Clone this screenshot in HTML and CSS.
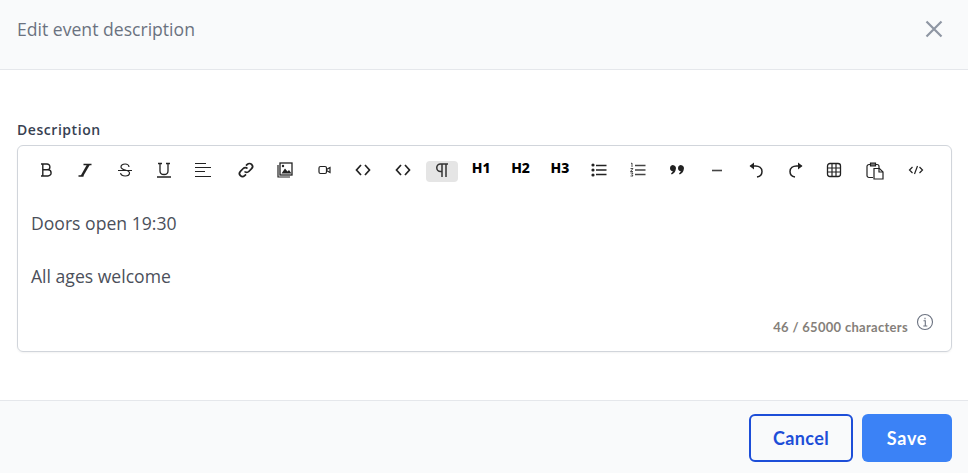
FILE: index.html
```html
<!DOCTYPE html>
<html lang="en">
<head>
<meta charset="utf-8">
<title>Edit event description</title>
<link rel="stylesheet" href="styles.css">
</head>
<body>
<div class="modal">
  <header class="modal-head">
    <h1 class="modal-title">Edit event description</h1>
    <button class="close" aria-label="Close">
      <svg width="18" height="18" viewBox="0 0 18 18"><path d="M1.500 1.500l15 15M16.500 1.500l-15 15" fill="none" stroke="#8f96a3" stroke-width="2.200"/></svg>
    </button>
  </header>
  <main class="modal-body">
    <label class="field-label">Description</label>
    <div class="editor">
      <div class="toolbar">
        <button class="tool"><svg class="ic" viewBox="0 0 16 16"><path d="M3 2H9a2.900 2.900 0 0 1 0 5.800H4.800M4.800 7.800h5.200a3.100 3.100 0 0 1 0 6.200H3M4.800 2v12" stroke-width="1.400"/></svg></button>
        <button class="tool"><svg class="ic" viewBox="0 0 16 16"><path d="M6.500 2.500h8M1.500 14h5" stroke-width="1.300"/><path d="M10 2.500h3L6.300 14H3.500z" fill="#222" stroke="none"/></svg></button>
        <button class="tool"><svg class="ic" viewBox="0 0 16 16"><path d="M12 5C11.800 3 10.200 2 8.200 2 5.800 2 4 3.200 4 5c0 3.700 8.500 2.300 8.500 6 0 2-1.900 3-4.300 3-2.500 0-4.200-1-4.700-2.800M1 8.500h14"/></svg></button>
        <button class="tool"><svg class="ic" viewBox="0 0 16 16"><path d="M2 1.500h4M4 1.500V9c0 2.400 1.500 3.500 4 3.500s4-1.100 4-3.500V1.500M10 1.500h4M1 15h14" stroke-width="1.300"/></svg></button>
        <button class="tool"><svg class="ic" viewBox="0 0 16 16"><path d="M0 1.500h11M0 5.500h16M0 9.500h10M0 14.500h16"/></svg></button>
        <button class="tool tool-gap"><svg class="ic" viewBox="0 0 16 16"><path d="M6.500 9.500a3 3 0 0 0 4.300 0l2.800-2.800a3 3 0 0 0-4.300-4.300L8 3.700M9.500 6.500a3 3 0 0 0-4.300 0L2.400 9.300a3 3 0 0 0 4.300 4.300L8 12.300" stroke-width="1.700"/></svg></button>
        <button class="tool"><svg class="ic" viewBox="0 0 16 16"><path d="M1 3v12h12"/><rect x="3" y="1" width="12" height="12" stroke-width="1.300"/><path d="M4.500 11.500l3.500-5 2.500 3 1.500-1.500 2.500 3.500z" fill="#222" stroke="none"/><circle cx="6" cy="4" r="1.200" fill="#222" stroke="none"/></svg></button>
        <button class="tool"><svg class="ic" viewBox="0 0 16 16"><rect x="3" y="4.500" width="7.500" height="7" rx="1.500"/><path d="M10.500 7.500l3.500-2v5l-3.500-2"/></svg></button>
        <button class="tool"><svg class="ic" viewBox="0 0 16 16"><path d="M6 3L1.500 8 6 13M10 3l4.500 5L10 13" stroke-width="1.700"/></svg></button>
        <button class="tool"><svg class="ic" viewBox="0 0 16 16"><path d="M6 3L1.500 8 6 13M10 3l4.500 5L10 13" stroke-width="1.700"/></svg></button>
        <button class="tool is-active"><svg class="ic" viewBox="0 0 16 16"><path d="M14 2H6.500a3.500 3.500 0 0 0 0 7.500H8M8 2v13M12 2v13" stroke="#333" stroke-width="1.500"/></svg></button>
        <button class="tool tool-h">H1</button>
        <button class="tool tool-h">H2</button>
        <button class="tool tool-h">H3</button>
        <button class="tool"><svg class="ic" viewBox="0 0 16 16"><path d="M5 3.500h10.500M5 8h10.500M5 12.500h10.500" stroke-width="1.400"/><circle cx="2" cy="3" r="1.600" fill="#222" stroke="none"/><circle cx="2" cy="8" r="1.600" fill="#222" stroke="none"/><circle cx="2" cy="13" r="1.600" fill="#222" stroke="none"/></svg></button>
        <button class="tool"><svg class="ic" viewBox="0 0 16 16"><path d="M5 3.500h10.500M5 8h10.500M5 12.500h10.500" stroke="#444" stroke-width="1.400"/><path d="M1 1.500l1-.500V5M.5 6.500h2.500l-2.500 3h2.500M.5 11h2.500l-1 1.500 1 1.500H.5" stroke-width=".8"/></svg></button>
        <button class="tool"><svg class="ic" viewBox="0 0 16 16"><path d="M0 6.200a3 3 0 1 1 5.800 1C5.500 9.500 4 11.500 1.800 12.500L1 11.500c1-.600 1.600-1.400 1.800-2.400A3 3 0 0 1 0 6.200zM8 6.200a3 3 0 1 1 5.800 1c-.300 2.300-1.800 4.300-4 5.300l-.800-1c1-.600 1.600-1.400 1.800-2.400A3 3 0 0 1 8 6.200z" fill="#222" stroke="none"/></svg></button>
        <button class="tool"><svg class="ic" viewBox="0 0 16 16"><path d="M3 8.500h10" stroke-width="1.600" stroke="#444"/></svg></button>
        <button class="tool"><svg class="ic" viewBox="0 0 16 16"><path d="M9 15c3-.500 5-2.500 5-5.500 0-3.500-3-5.500-6.500-5.500H2.500" stroke-width="1.500"/><path d="M6 .500L1.500 4 6 7.500z" fill="#222" stroke="none"/></svg></button>
        <button class="tool"><svg class="ic" viewBox="0 0 16 16"><path d="M7 15c-3-.500-5-2.500-5-5.500C2 6 5 4 8.500 4h5" stroke-width="1.500"/><path d="M10 .500L14.500 4 10 7.500z" fill="#222" stroke="none"/></svg></button>
        <button class="tool"><svg class="ic" viewBox="0 0 16 16"><rect x="0.500" y="1.500" width="13" height="13" rx="2.500" stroke-width="1.300"/><path d="M.5 6h13M.5 10h13M5 1.500v13M9 1.500v13"/></svg></button>
        <button class="tool tool-nudge"><svg class="ic ic-paste" viewBox="0 0 18 18"><path d="M7 15.500H3a2 2 0 0 1-2-2V4.500a2 2 0 0 1 2-2h1M10 2.500h1a2 2 0 0 1 2 2V6"/><path d="M4.500 1h5v3h-5z" fill="#777"/><path d="M8 6.500h5.500l3.500 3.500v7H8z"/><path d="M13 6.500V10h4"/></svg></button>
        <button class="tool tool-nudge"><svg class="ic" viewBox="0 0 16 16"><path d="M4.500 5L1.500 8l3 3M11.500 5l3 3-3 3M9.500 4L6.500 12" stroke-width="1.200"/></svg></button>
      </div>
      <div class="content">
        <p class="line">Doors open 19:30</p>
        <p class="line">All ages welcome</p>
      </div>
      <div class="counter">
        <span>46 / 65000 characters</span>
        <svg class="info" width="18" height="18" viewBox="0 0 18 18"><circle cx="9" cy="9" r="7.500" fill="none" stroke="#6b7280" stroke-width="1.100"/><path d="M7.500 7.800H9.300V13M7.300 13h4M9 4.700v1.600" fill="none" stroke="#6b7280" stroke-width="1.100"/></svg>
      </div>
    </div>
  </main>
  <footer class="modal-foot">
    <button class="btn btn-outline">Cancel</button>
    <button class="btn btn-primary">Save</button>
  </footer>
</div>
</body>
</html>
```
FILE: styles.css
```css
* { box-sizing: border-box; }
html, body { margin: 0; height: 100%; }
body { background: #fff; font-family: "Open Sans", "Noto Sans", sans-serif; overflow: hidden; }
.modal { display: flex; flex-direction: column; height: 473px; }
.modal-head {
  height: 70px; background: #f9fafb; border-bottom: 1px solid #e5e7eb;
  display: flex; align-items: center; justify-content: space-between; padding: 0 25px 11px 17px;
}
.modal-title { margin: 0; font-size: 17.600px; font-weight: 400; color: #6b7280; line-height: 24px; }
.close { border: 0; background: none; padding: 0; display: flex; }
.modal-body { flex: 1; padding: 50px 16px 0 17px; }
.field-label { display: block; font-size: 14px; font-weight: 600; color: #374151; line-height: 20px; margin-bottom: 5px; letter-spacing: .55px; }
.editor { height: 207px; border: 1px solid #d1d5db; border-radius: 6px; box-shadow: 0 1px 2px rgba(0,0,0,.05); display: flex; flex-direction: column; }
.toolbar { display: flex; gap: 7.300px; padding: 15px 0 0 12px; height: 38px; }
.tool { width: 32px; height: 21px; border: 0; background: none; border-radius: 4px; padding: 1px 0 0; display: flex; align-items: flex-start; justify-content: center; flex: none; }
.tool-gap { margin-left: 4px; margin-right: -1px; }
.tool-nudge { margin-left: 1px; }
.tool.is-active { background: #e5e5e5; }
.tool-h { font-family: "Noto Sans", sans-serif; font-weight: 800; font-size: 14px; color: #000; line-height: 14px; padding-top: 0; }
.ic { width: 16px; height: 16px; fill: none; stroke: #222; stroke-width: 1.200; overflow: visible; }
.ic-paste { width: 18px; height: 18px; }
.content { padding: 27px 13px 0; flex: 1; }
.line { margin: 0 0 28px; font-size: 17.600px; line-height: 25px; color: #4b4f5a; }
.counter { display: flex; justify-content: flex-end; align-items: center; gap: 8px; padding: 0 17px 15px 0; font-family: "Lato", sans-serif; font-size: 13px; letter-spacing: .3px; font-weight: 700; color: #857f7a; line-height: 18px; }
.info { position: relative; top: -5px; }
.modal-foot { height: 73px; background: #f9fafb; border-top: 1px solid #e5e7eb; display: flex; justify-content: flex-end; align-items: flex-start; gap: 9px; padding: 13px 16px 0 0; }
.btn { height: 48px; border-radius: 6px; font-family: "Lato", sans-serif; font-size: 18px; letter-spacing: .4px; font-weight: 700; }
.btn-outline { width: 104px; background: transparent; border: 2px solid #1d4ed8; color: #1d4ed8; }
.btn-primary { width: 90px; background: #3b82f6; border: 0; color: #fff; letter-spacing: .7px; }
```
